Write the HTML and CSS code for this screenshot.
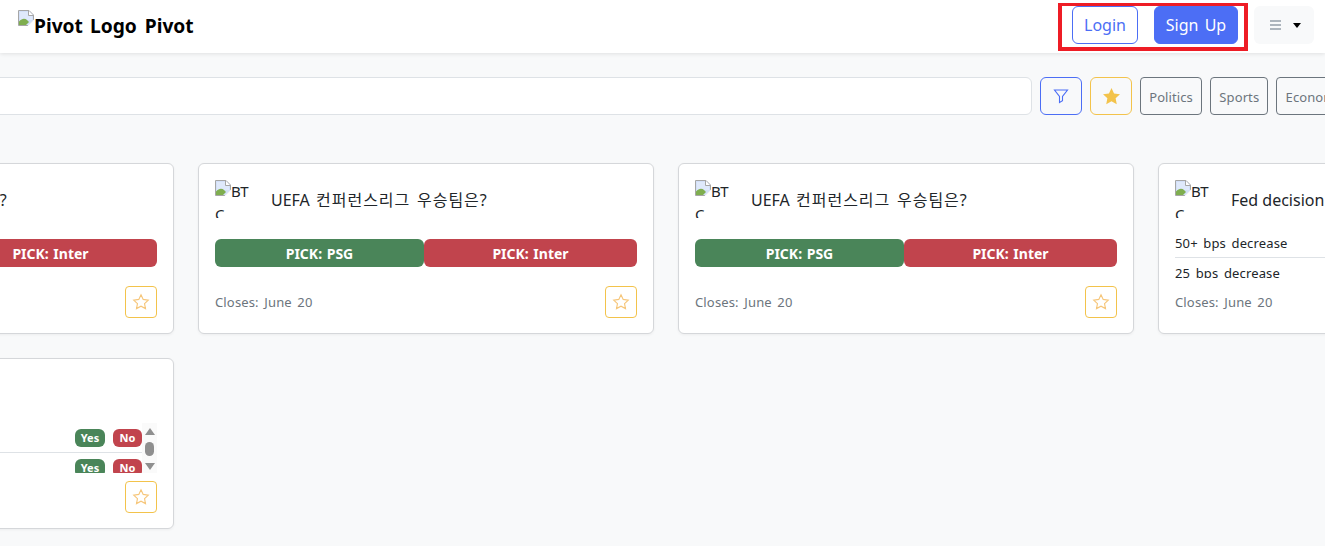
FILE: index.html
```html
<!DOCTYPE html>
<html lang="ko">
<head>
<meta charset="utf-8">
<title>Pivot</title>
<link rel="stylesheet" href="styles.css">
</head>
<body>
<svg class="defs" width="0" height="0" aria-hidden="true">
  <symbol id="broken" viewBox="0 0 16 16">
    <path d="M.5.5h10.5l4.5 4.5v5.5l-5 5H.5z" fill="#d3e0f8" stroke="#a6a6a6"/>
    <path d="M2 2h8v4h4v4H2z" fill="#dfe9fb"/>
    <path d="M1 15v-3.5c3-3.5 6-3.5 8-1.5l2 2-3 3z" fill="#7fae4f"/>
    <path d="M10.5.8v4.7h4.7" fill="#fff" stroke="#a6a6a6"/>
    <path d="M9.5 16 16 9.5V16z" fill="#fff"/>
  </symbol>
  <symbol id="star" viewBox="0 0 16 16">
    <path d="M8 1.6l1.95 4.1 4.5.6-3.3 3.1.85 4.45L8 11.7l-4 2.15.85-4.45-3.3-3.1 4.5-.6z"/>
  </symbol>
  <symbol id="funnel" viewBox="0 0 16 16">
    <path d="M1.5 2h13l-5 6.4v4.2L6.5 14.5V8.4z"/>
  </symbol>
</svg>

<header class="topbar">
  <a class="brand"><svg class="broken"><use href="#broken"/></svg><span class="brand-text">Pivot Logo</span><span class="brand-text">Pivot</span></a>
  <div class="top-actions">
    <div class="auth">
      <button class="btn-login">Login</button>
      <button class="btn-signup">Sign Up</button>
      <span class="highlight"></span>
    </div>
    <button class="btn-menu"><span class="bars"><i></i><i></i><i></i></span><span class="caret"></span></button>
  </div>
</header>

<main class="page">
  <div class="filters">
    <input class="search" type="text" aria-label="Search">
    <button class="icon-btn icon-blue"><svg class="funnel"><use href="#funnel"/></svg></button>
    <button class="icon-btn icon-gold"><svg class="star-fill"><use href="#star"/></svg></button>
    <button class="tag">Politics</button>
    <button class="tag">Sports</button>
    <button class="tag">Economy</button>
  </div>

  <div class="grid">
    <article class="card">
      <div class="card-head">
        <div class="thumb"><svg class="broken"><use href="#broken"/></svg>BTC</div>
        <h3 class="title">UEFA <span class="ko">컨퍼런스리그 우승팀은?</span></h3>
      </div>
      <div class="picks"><button class="pick green">PICK: PSG</button><button class="pick red">PICK: Inter</button></div>
      <div class="card-foot"><span class="closes">Closes: June 20</span><button class="fav"><svg class="star-line"><use href="#star"/></svg></button></div>
    </article>

    <article class="card">
      <div class="card-head">
        <div class="thumb"><svg class="broken"><use href="#broken"/></svg>BTC</div>
        <h3 class="title">UEFA <span class="ko">컨퍼런스리그 우승팀은?</span></h3>
      </div>
      <div class="picks"><button class="pick green">PICK: PSG</button><button class="pick red">PICK: Inter</button></div>
      <div class="card-foot"><span class="closes">Closes: June 20</span><button class="fav"><svg class="star-line"><use href="#star"/></svg></button></div>
    </article>

    <article class="card">
      <div class="card-head">
        <div class="thumb"><svg class="broken"><use href="#broken"/></svg>BTC</div>
        <h3 class="title">UEFA <span class="ko">컨퍼런스리그 우승팀은?</span></h3>
      </div>
      <div class="picks"><button class="pick green">PICK: PSG</button><button class="pick red">PICK: Inter</button></div>
      <div class="card-foot"><span class="closes">Closes: June 20</span><button class="fav"><svg class="star-line"><use href="#star"/></svg></button></div>
    </article>

    <article class="card">
      <div class="card-head">
        <div class="thumb"><svg class="broken"><use href="#broken"/></svg>BTC</div>
        <h3 class="title">Fed decision in June?</h3>
      </div>
      <div class="list">
        <div class="row"><span class="row-label">50+ bps decrease</span><span class="mini green">Yes</span><span class="mini red">No</span></div>
        <div class="row"><span class="row-label">25 bps decrease</span><span class="mini green">Yes</span><span class="mini red">No</span></div>
      </div>
      <div class="card-foot"><span class="closes">Closes: June 20</span><button class="fav"><svg class="star-line"><use href="#star"/></svg></button></div>
    </article>

    <article class="card">
      <div class="card-head">
        <div class="thumb"><svg class="broken"><use href="#broken"/></svg>BTC</div>
        <h3 class="title">Fed decision in June?</h3>
      </div>
      <div class="list with-scroll">
        <div class="rows">
          <div class="row"><span class="row-label">50+ bps decrease</span><span class="mini green">Yes</span><span class="mini red">No</span></div>
          <div class="row"><span class="row-label">25 bps decrease</span><span class="mini green">Yes</span><span class="mini red">No</span></div>
        </div>
        <div class="scroll"><span class="arrow-up"></span><span class="thumb-bar"></span><span class="arrow-down"></span></div>
      </div>
      <div class="card-foot"><span class="closes">Closes: June 20</span><button class="fav"><svg class="star-line"><use href="#star"/></svg></button></div>
    </article>
  </div>
</main>
</body>
</html>
```
FILE: styles.css
```css
* { box-sizing: border-box; }
html, body { height: 100%; }
body {
  margin: 0;
  overflow: hidden;
  background: #f8f9fa;
  color: #212529;
  font-family: "Noto Sans", "Noto Sans CJK KR", sans-serif;
  font-size: 16px;
  word-spacing: 2px;
}
button { font: inherit; word-spacing: inherit; cursor: pointer; }
.defs { position: absolute; }

.topbar {
  height: 53px;
  background: #fff;
  box-shadow: 0 1px 4px rgba(0,0,0,.1);
  display: flex;
  align-items: center;
  justify-content: space-between;
  padding: 0 11px 3px 18px;
}
.brand { display: flex; align-items: flex-start; margin-top: 2px; color: #000; font-weight: 700; font-size: 19.2px; line-height: 26px; }
.brand .broken { margin-top: -3px; }
.brand-text { margin-right: 8px; white-space: nowrap; }
.broken { width: 16px; height: 16px; flex: none; }
.top-actions { display: flex; align-items: center; gap: 16px; }
.auth { position: relative; display: flex; gap: 16px; }
.btn-login, .btn-signup, .btn-menu { height: 38px; border-radius: 6px; padding: 0; }
.btn-login { width: 66px; background: #fff; color: #4c6ef5; border: 1px solid #4c6ef5; }
.btn-signup { width: 84px; background: #4c6ef5; color: #fff; border: 1px solid #4c6ef5; }
.highlight { position: absolute; left: -14px; top: -3px; width: 190px; height: 48px; border: solid #ee1c25; border-width: 3px 4px 4px; }
.btn-menu { width: 60px; background: #f8f9fa; border: 0; display: flex; align-items: center; justify-content: center; gap: 12px; padding-left: 2px; }
.bars { display: flex; flex-direction: column; gap: 2px; width: 11px; }
.bars i { display: block; height: 2px; background: #adb5bd; }
.caret { border: 4px solid transparent; border-top: 5px solid #000; border-bottom: 0; }

.page { margin-left: -282px; width: 1920px; }
.filters { display: flex; gap: 8px; padding-top: 24px; align-items: stretch; height: 62px; }
.search { width: 1314px; border: 1px solid #dee2e6; border-radius: 6px; background: #fff; }
.icon-btn { width: 42px; border-radius: 6px; background: transparent; padding: 0; display: flex; align-items: center; justify-content: center; }
.icon-blue { border: 1px solid #4c6ef5; }
.icon-gold { border: 1px solid #f3c34b; }
.funnel { width: 16px; height: 16px; fill: none; stroke: #4c6ef5; stroke-width: 1.1; }
.star-fill { width: 21px; height: 21px; fill: #f3c34b; }
.tag { padding: 1px 8.2px 0; border: 1px solid #6c757d; border-radius: 4px; background: transparent; color: #6c757d; font-size: 13px; letter-spacing: .1px; }

.grid { display: grid; grid-template-columns: repeat(4, 456px); gap: 24px; padding-top: 48px; }
.card {
  height: 171px;
  background: #fff;
  border: 1px solid #d5d7da;
  border-radius: 6px;
  box-shadow: 0 1px 3px rgba(0,0,0,.05);
  padding: 16px;
  display: flex;
  flex-direction: column;
}
.card-head { display: flex; align-items: center; gap: 16px; height: 38px; flex: none; overflow: hidden; margin-bottom: 10px; }
.thumb { width: 40px; height: 38px; flex: none; overflow: hidden; font-size: 15px; line-height: 23px; letter-spacing: -.5px; word-break: break-all; align-self: flex-start; word-spacing: 0; }
.thumb .broken { vertical-align: top; }
.title { margin: 0; padding-top: 1px; font-size: 16px; font-weight: 400; line-height: 24px; white-space: nowrap; word-spacing: 0; }
.ko { margin-left: 2px; letter-spacing: 1px; word-spacing: 1.5px; }
.picks { height: 50px; display: flex; align-items: center; flex: none; }
.pick { height: 28px; border: 0; border-radius: 6px; color: #fff; font-size: 14px; font-weight: 700; padding: 0; word-spacing: 1px; }
.pick.green { flex: 209 1 0; }
.pick.red { flex: 213 1 0; }
.green { background: #4a8559; }
.red { background: #c1444d; }
.list { height: 50px; overflow: hidden; flex: none; }
.with-scroll { display: flex; }
.rows { flex: 1; }
.row { height: 30px; display: flex; align-items: center; gap: 8px; border-bottom: 1px solid #dee2e6; font-size: 13px; letter-spacing: .15px; }
.row-label { flex: 1; }
.mini { width: 30px; height: 18px; margin-top: 1px; border-radius: 6px; color: #fff; font-size: 11px; font-weight: 700; text-align: center; line-height: 18px; word-spacing: 0; letter-spacing: 0; }
.mini.red { width: 29px; }
.scroll { width: 15px; flex: none; background: #fafafa; display: flex; flex-direction: column; align-items: center; justify-content: space-between; padding: 5px 0 3px; }
.arrow-up { border: 5px solid transparent; border-bottom: 7px solid #8f8f8f; border-top: 0; }
.arrow-down { border: 5px solid transparent; border-top: 7px solid #8f8f8f; border-bottom: 0; }
.thumb-bar { width: 9px; height: 14px; background: #8f8f8f; border-radius: 5px; }
.card-foot { display: flex; align-items: center; justify-content: space-between; margin-top: 8px; }
.closes { font-size: 13px; color: #6c757d; letter-spacing: .15px; }
.fav { width: 32px; height: 32px; padding: 0; border: 1px solid #f3c34b; border-radius: 4px; background: #fff; display: flex; align-items: center; justify-content: center; }
.star-line { width: 18px; height: 18px; fill: none; stroke: #f6c67a; stroke-width: 1; }
```
